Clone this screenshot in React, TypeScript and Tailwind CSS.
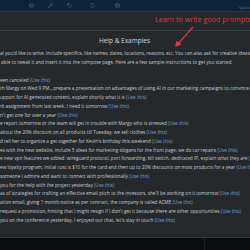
import React from 'react';
import { Inbox, Pencil, Tag, Smartphone, Briefcase } from 'lucide-react';

interface Example {
  text: string;
}

const examples: Example[] = [
  { text: "een canceled" },
  { text: "th Margy on Wed 9 PM., prepare a presentation on advantages of using AI in our marketing campaigns to convince her" },
  { text: "upport for AI generated content, explain shortly what it is" },
  { text: "rk assignment from last week. I need it tomorrow" },
  { text: "n't get one for over a year" },
  { text: "e report tomorrow or the team will get in trouble with Margy who is stressed" },
  { text: "about the 20% discount on all products till Tuesday, we sell clothes" },
  { text: "d tell her to organize a get-together for Kevin's birthday this weekend" },
  { text: "es with the new website, include 5 ideas for marketing slogans for the front page, we do car repairs" },
  { text: "e new vpn features we added: wireguard protocol, port forwarding, kill switch, dedicated IP, explain what they are" },
  { text: "ew loyalty program, initial cost is $10 for the card and then up to 20% discounts on most products for a year" },
  { text: "someone I admire and want to connect with professionally" },
  { text: "you for the help with the project yesterday" },
  { text: "as of strategies for crafting an effective email pitch to the investors, she'll be working on it tomorrow" },
  { text: "ation email, giving 1 month notice as per contract, the company is called ACME" },
  { text: "request a promotion, hinting that I might resign if I don't get it because there are other opportunities" },
  { text: "you on the conference yesterday, I enjoyed our chat, let's stay in touch" },
];

export default function App() {
  return (
    <div className="relative w-[250px] h-[250px] overflow-hidden bg-[#25292c] flex flex-col font-['Open_Sans',sans-serif]">
      {/* top nav */}
      <div className="relative h-[12px] shrink-0 bg-[#0f2439] border-b border-[#2a3947] flex items-center pl-[29px] text-[#55687a]">
        <Inbox size={5} strokeWidth={2.5} />
        <Pencil size={5} strokeWidth={2.5} className="ml-[14px]" />
        <Tag size={5} strokeWidth={2.5} className="ml-[14px]" />
        <Smartphone size={5} strokeWidth={2.5} className="ml-[18px]" />
        <Briefcase size={5} strokeWidth={2.5} className="ml-[20px]" />
        <span className="absolute left-[239px] top-[6px] text-[4px] leading-none text-[#6b7a88]">Options</span>
      </div>

      {/* page behind the dialog */}
      <div className="h-[18px] shrink-0"></div>

      {/* dialog */}
      <div className="flex-1 border-t border-[#3a4044] flex flex-col">
        <div className="h-[13px] flex items-end justify-center">
          <h2 className="text-[6.5px] leading-none text-[#d3d7da] ml-[-1px]">Help &amp; Examples</h2>
        </div>
        <div className="mt-[5px] text-[4.7px] leading-[8.75px] text-[#c6cbcf] whitespace-nowrap">
          <p>al you'd like to write. Include specifics, like names, dates, locations, reasons, etc. You can also ask for creative ideas or explore</p>
          <p className="pl-[1px]">able to tweak it and insert it into the compose page. Here are a few sample instructions to get you started:</p>
          <ul className="mt-[9px]">
            {examples.map((ex, i) => (
              <li key={i}>
                {ex.text} <span className="text-[#6ea2d8]">(Use this)</span>
              </li>
            ))}
          </ul>
        </div>
      </div>

      {/* bottom bar */}
      <div className="h-[13px] shrink-0 bg-[#0b0d0f] border-t border-[#394045] flex">
        <div className="w-[205px] border-r border-[#1d2023]"></div>
      </div>

      {/* annotation */}
      <div className="absolute left-[155px] top-[16px] text-[7.2px] leading-none text-[#de3b3b] whitespace-nowrap">
        Learn to write good prompts
      </div>
      <svg className="absolute left-[170px] top-[24px]" width="28" height="26" viewBox="0 0 28 26">
        <line x1="23" y1="3" x2="7" y2="21" stroke="#d93a3a" strokeWidth="1.3" />
        <path d="M5 23 L6.5 16.5 L11.5 20.5 Z" fill="#d93a3a" />
      </svg>
    </div>
  );
}
